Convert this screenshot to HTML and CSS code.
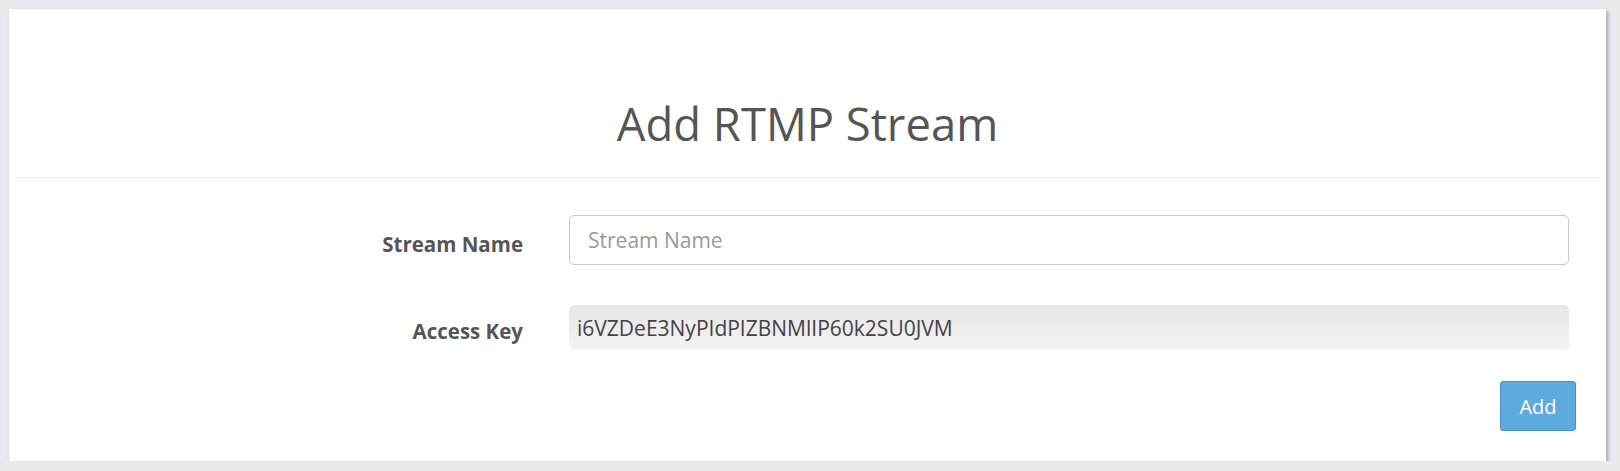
FILE: index.html
```html
<!DOCTYPE html>
<html lang="en">
<head>
    <meta charset="UTF-8">
    <meta name="viewport" content="width=device-width, initial-scale=1.0">
    <title>Add RTMP Stream</title>
    <link rel="stylesheet" href="styles.css">
</head>
<body>
    <div class="panel">
        <div class="panel-header">
            <h2>Add RTMP Stream</h2>
        </div>

        <form class="stream-form" onsubmit="return false;">
            <div class="form-row">
                <label for="streamName">Stream Name</label>
                <input type="text" id="streamName" class="text-input" placeholder="Stream Name">
            </div>

            <div class="form-row last">
                <label for="accessKey">Access Key</label>
                <input type="text" id="accessKey" class="text-input readonly" value="i6VZDeE3NyPIdPIZBNMlIP60k2SU0JVM" readonly>
            </div>

            <div class="form-actions">
                <button type="submit" class="btn-add">Add</button>
            </div>
        </form>
    </div>
</body>
</html>
```

FILE: styles.css
```css
body {
    margin: 0;
    background-color: #e8ebee;
    font-family: "Open Sans", "Noto Sans", sans-serif;
    color: #555;
}
.panel {
    width: 1583px;
    margin: 9px 0 0 9px;
    padding: 0 7px 30px;
    background: #fff;
    box-shadow: 2px 2px 4px rgba(0,0,0,0.3);
}
.panel-header {
    padding: 92px 0 31px;
    border-bottom: 1px solid #e6e6e6;
    text-align: center;
}
.panel-header h2 {
    margin: 0;
    font-size: 45.4px;
    font-weight: 400;
    line-height: 45px;
    color: #555;
}
.stream-form {
    padding-top: 37px;
}
.form-row {
    display: flex;
    align-items: center;
    gap: 46px;
    margin-bottom: 40px;
}
.form-row.last {
    margin-bottom: 31px;
}
.form-row label {
    width: 507px;
    text-align: right;
    font-size: 20.5px;
    font-weight: 700;
    color: #555;
    padding-top: 7px;
}
.text-input {
    box-sizing: border-box;
    width: 1000px;
    height: 50px;
    padding: 0 18px;
    border: 1px solid #ccc;
    border-radius: 5px;
    font-family: inherit;
    font-size: 21px;
    color: #444;
    background: #fff;
    outline: none;
}
.text-input::placeholder {
    color: #999;
}
.text-input.readonly {
    height: 45px;
    padding: 0 8px;
    border: none;
    background: linear-gradient(#e7e7e7, #f3f3f3);
    color: #444;
}
.form-actions {
    display: flex;
    justify-content: flex-end;
    padding-right: 23px;
}
.btn-add {
    width: 76px;
    height: 50px;
    border: 1px solid #4a8fc9;
    border-radius: 3px;
    background-color: #5daade;
    color: #fff;
    font-family: inherit;
    font-size: 20px;
    cursor: pointer;
}
```
